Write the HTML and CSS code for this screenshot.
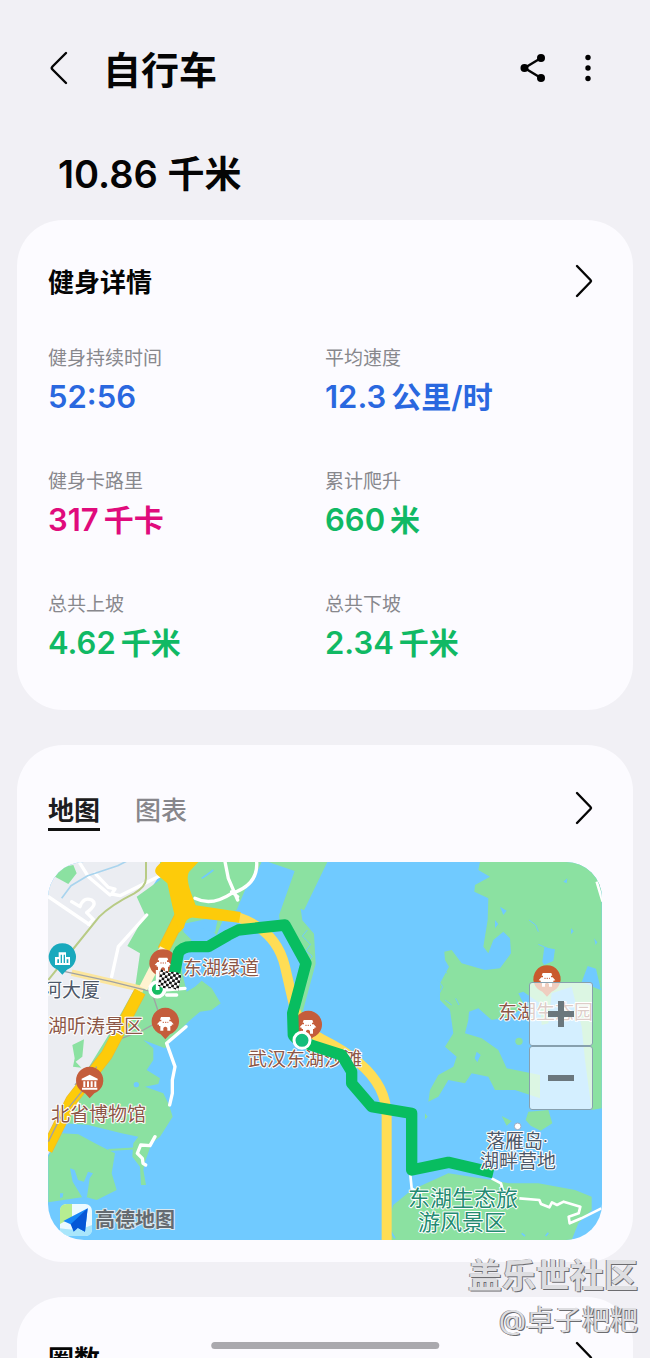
FILE: index.html
```html
<!DOCTYPE html>
<html lang="zh-CN">
<head>
<meta charset="utf-8">
<meta name="viewport" content="width=device-width, initial-scale=1">
<title>自行车</title>
<link rel="stylesheet" href="styles.css">
</head>
<body>
<div class="app">
  <header class="topbar">
    <button class="icon-btn" type="button" aria-label="返回">
      <svg width="20" height="34" viewBox="0 0 20 34"><path class="line" d="M18 2 4.500 15.500Q3 17 4.500 18.500L18 32"/></svg>
    </button>
    <h1 class="title">自行车</h1>
    <div class="actions">
      <button class="icon-btn" type="button" aria-label="分享">
        <svg width="26" height="30" viewBox="0 0 26 30"><path class="line" d="M21 5 4.500 15 21 25"/><circle cx="21" cy="5" r="4"/><circle cx="4.500" cy="15" r="4"/><circle cx="21" cy="25" r="4"/></svg>
      </button>
      <button class="icon-btn" type="button" aria-label="更多选项">
        <svg width="8" height="30" viewBox="0 0 8 30"><circle cx="4" cy="4.500" r="2.700"/><circle cx="4" cy="15" r="2.700"/><circle cx="4" cy="25.500" r="2.700"/></svg>
      </button>
    </div>
  </header>

  <p class="distance">10.86 <span class="distance-unit">千米</span></p>

  <main class="cards">
    <section class="card">
      <div class="card-head">
        <h2 class="card-title">健身详情</h2>
        <button class="icon-btn" type="button" aria-label="查看健身详情">
          <svg width="20" height="38" viewBox="0 0 20 38"><path class="line" d="m3 2 13.500 14q1 1 0 2L3 32"/></svg>
        </button>
      </div>
      <dl class="stats">
        <div><dt>健身持续时间</dt><dd class="blue">52:56</dd></div>
        <div><dt>平均速度</dt><dd class="blue">12.3<span class="unit">公里/时</span></dd></div>
        <div><dt>健身卡路里</dt><dd class="pink">317<span class="unit">千卡</span></dd></div>
        <div><dt>累计爬升</dt><dd class="green">660<span class="unit">米</span></dd></div>
        <div><dt>总共上坡</dt><dd class="green">4.62<span class="unit">千米</span></dd></div>
        <div><dt>总共下坡</dt><dd class="green">2.34<span class="unit">千米</span></dd></div>
      </dl>
    </section>

    <section class="card card-map">
      <div class="card-head">
        <div class="tabs" role="tablist">
          <button class="tab tab-active" type="button" role="tab" aria-selected="true">地图</button>
          <button class="tab" type="button" role="tab" aria-selected="false">图表</button>
        </div>
        <button class="icon-btn" type="button" aria-label="查看地图">
          <svg width="20" height="38" viewBox="0 0 20 38"><path class="line" d="m3 2 13.500 14q1 1 0 2L3 32"/></svg>
        </button>
      </div>
      <div class="map">
        <svg class="map-svg" viewBox="48 862 554 378" preserveAspectRatio="xMidYMid slice" role="img" aria-label="骑行路线地图">
          <defs>
            <g id="pagoda" fill="#fff">
              <path d="M-13-20h26l3 8h-4v5h5l8 9-6 1v4h-4v14H6v-8q-6-8-12 0v8h-9V7h-4V3l-6-1 8-9h5v-5h-4z"/>
              <path d="M-8-4H9" stroke="#c45d3b" stroke-width="3" stroke-dasharray="4 3"/>
            </g>
            <path id="pin" d="M0 50-14 35A41 41 0 1 1 14 35Z" transform="translate(0 -3)"/>
            <pattern id="checks" width="16" height="16" patternUnits="userSpaceOnUse"><path fill="#fff" d="M0 0h16v16H0z"/><path fill="#151515" d="M0 0h8v8H0zM8 8h8v8H8z"/></pattern>
          </defs>
          <g transform="translate(40 855) scale(.333333)">
            <!-- water and built-up area -->
            <path class="water" d="M0 0h1700v1170H0z"/>
            <path class="urban" d="M0 0h400L320 120l-10 270L190 620 24 900z"/>
            <!-- western shore -->
            <g transform="translate(15 15)">
              <path class="land" d="M345 5H650L625 60 600 90 575 150 540 165 515 225 480 195 430 195 415 215 440 240 405 265 412 340 425 395 450 380 470 362 500 385 527 430 500 450 465 455 430 485 390 525 360 565 295 540 325 565 325 600 305 630 345 655 340 672 300 680 355 700 372 735 383 770 345 830 320 850 300 905 295 930 303 975 288 975 285 920 262 890 265 850 280 830 230 820 130 795 60 790 10 900 60 740 120 640 200 510 270 385 285 280 247 258 300 165 275 110 345 60Z"/>
              <path class="land" d="M10 890 50 820 100 823 150 850 185 868 210 880 200 940 215 990 155 1020 120 1010 10 1027Z"/>
              <path class="water" d="m75 925 8 40 30 50 13-5 8-55 10-15-15-5-12 30-18-5-10-30zM45 1000h10l-2 12-8 2zM400 195l70-15 50-12-10 50-60-20-35 15z"/>
              <circle class="water" cx="274" cy="674" r="8"/>
              <path class="land-line" d="m190 870 90-5"/>
              <path class="land" d="m30 50 20-28 35-7 10 25-25 32zM82 555l35-17-5 52-20 15 17 18-25-3 5-25z"/>
              <path class="water-line" d="m470 55 15-10 20-15"/>
            </g>
            <!-- causeway -->
            <path class="land" d="M685 21H862l-70 145-10-5 5 35 35 40 5 90-35 130-20 70h-12l30-190-70-130-3-25 47-133z"/>
            <path class="water-line thin" d="m802 225-15 18 25 25-15 20 20 15-15 20"/>
            <!-- eastern shore -->
            <g transform="translate(1155 15)">
              <path class="land" d="M165 5 160 30 195 50 150 75 148 95 190 115 188 180 175 260 190 280 205 240 235 215 255 235 258 280 225 325 180 330 110 310 80 270 58 275 60 300 72 320 45 370 45 420 75 450 85 520 60 560 95 590 85 620 40 645 15 690 10 725 40 710 70 660 120 670 140 640 190 650 210 690 270 690 345 715 345 645 245 625 220 570 170 535 120 520 130 480 132 455 160 445 200 480 250 470 300 440 280 400 295 395 345 430 350 495 370 490 380 400 440 380 470 500 480 600 500 750 530 745V5Z"/>
              <path class="water" d="m358 262 32 6-5 35-28 12-5-10zM488 318l25 8 15 65-58-25zM225 140l20 12-10 13zM210 180l10 12-10 13zM438 205l8 9-8 9zM507 235l10 12-5 8zM415 65l12-10-2 15zM155 575l12 10-10 22-8-12z"/>
              <path class="water-line thin" d="m312 180 20 15 8 20m0 38 28 12M38 360l15 20-15 30m15-90 12 20m-5 80 20 15m-10 70 12 15m10-105 10 20"/>
              <circle class="land" cx="282" cy="544" r="11"/>
              <path class="land" d="m302 780 8-25 60-5 12 40-35 22-30-15zM230 768l30 15-15 14zM0 760l8 10-8 8z"/>
              <path class="land" d="M-130 1140-95 1035-40 990 70 940 200 960 250 970 340 970 450 990 500 1010 500 1050 460 1090 440 1140Z"/>
              <path class="water-line" d="m-115 1095 25 40M290 1120l10 8m70-10-8 10"/>
              <path class="road-thin" d="m200 955 28 15 5 20 20 15m30 10 60 5 5 12 25 10 8-15 15 8 20-10 50 15-5 20-30 10 3 20 35-15 60-30M515 65l18 60"/>
            </g>
            <path class="road-thin" d="m1110 950 5 50 15 10"/>
            <!-- minor roads -->
            <g transform="translate(15 15)">
              <path class="road" d="m105 10 25 40 65 55m-185 5 125 85M80 125l25 15q10-30 35-20 20 12-15 38l20 20-15 15M150 40l40 42 20 5-10 15 25 5 120-60M305 165l-85 95-20 90"/>
              <path class="road" d="m540 5 10 50 28 65M450 115q50 25 110-15Q640 75 635 5M578 110l-18-15"/>
              <path class="road" d="M365 405h30m-40-15 65-5M365 550l58-50m-58 50 25 70-8 40 0 40-8 35M90 715l20 40M330 830l-15 27-28-2-10 25 15 15 2 15 8 5"/>
              <path class="creek" d="m50 115 28-38 50-30 90-30 30-15"/>
              <path class="avenue" d="M303 5v50q0 25-35 45-70 35-105 70L82 270 10 360"/>
              <path d="m80 338 215 50" fill="none" stroke="#fce69d" stroke-width="19"/>
              <path class="hairline" d="m60 335 140 30 120 30 20 60 0 30-45 25-90 35-40 40-75 90"/>
            </g>
            <!-- motorways -->
            <path class="highway-edge" d="m435 155-65 130m-70 125-100 190-105 135-75 150"/>
            <path class="highway" d="m435 155-65 130m-70 125-100 190-105 135-75 150"/>
            <path d="m372 280-62 120" fill="none" stroke="#fff3d0" stroke-width="26"/>
            <path class="ring" d="M590 185q120 40 145 150l30 130 25 55 60 35q130 65 170 145 20 40 20 85v385l10 30"/>
            <path fill="#fdcb0a" d="M365 21h110l-28 30q-10 15 5 60l15 40 135 20-5 32-135-15q-25-3-30 30l-15 15-20-80-15-68-30-25q-18-15 13-39z"/>
            <path class="hairline" d="M170 635 125 710 60 790 25 860"/>
            <!-- place pins behind the route -->
            <use href="#pin" x="369" y="330" fill="#c45d3b"/><use href="#pagoda" x="369" y="328"/>
            <use href="#pin" x="805" y="515" fill="#c45d3b"/><use href="#pagoda" x="804" y="515"/>
          </g>
          <g class="label brown"><text x="248" y="1066">武汉东湖沙滩</text></g>
          <g transform="translate(40 855) scale(.333333)">
            <path class="route" d="m402 365 13-70q10-20 40-20t50 0l60-35 30-15 140-15 63 115-40 150 2 65q5 15 58 32l87 28 30 50v35l60 70 120 20v170l110-23 135 31"/>
            <circle cx="352" cy="403" r="22" fill="#14bd63" stroke="#fff" stroke-width="11"/>
            <path d="M353 345v60" stroke="#fff" stroke-width="11"/>
            <circle cx="786" cy="556" r="24" fill="#14bd7a" stroke="#fff" stroke-width="9"/>
            <path fill="url(#checks)" d="M0 0q18 8 33 3t31 3v50q-16-8-31-3T0 50z" transform="translate(362 342) rotate(10)"/>
            <use href="#pin" x="67" y="312" fill="#19a9bd"/>
            <path fill="#fff" d="M45 330v-24h11v-14h22v14h12v24zM52 313v11h5v-11zm10-14v25h4v-25zm9 0v25h4v-25zm9 14v11h5v-11z" fill-rule="evenodd"/>
            <use href="#pin" x="376" y="506" fill="#c45d3b"/><use href="#pagoda" x="376" y="506"/>
            <use href="#pin" x="149" y="683" fill="#c45d3b"/>
            <path fill="#fff" d="m149 659 24 12v5h-48v-5zM130 679h6v17h-6zm11 0h6v17h-6zm11 0h6v17h-6zm11 0h6v17h-6zm-37 19h46v6h-46z"/>
            <use href="#pin" x="1521" y="378" fill="#c95a2d"/><use href="#pagoda" x="1521" y="374"/>
            <circle cx="1433" cy="814" r="10" fill="#fff" stroke="#9eabc0" stroke-width="3"/>
            <!-- provider logo -->
            <rect x="60" y="1047" width="96" height="96" rx="20" fill="#ecfaff"/>
            <path fill="#b7ed91" d="M80 1047h16v40l-36 20v-40q0-20 20-20z"/>
            <path fill="#a9e6fb" d="M60 1120q50 10 96-10v13q0 20-20 20H80q-20 0-20-20z"/>
            <path fill="#1687f7" d="m143 1060-73 38 22 10 43 22z"/><path fill="#0557d6" d="m143 1060-51 48 9 22 13-11 21 11z"/>
          </g>
          <g class="label brown">
            <text x="183" y="975">东湖绿道</text>
            <text x="48" y="1033">湖听涛景区</text>
            <text x="51" y="1121">北省博物馆</text>
            <text x="498" y="1019">东湖生态园</text>
          </g>
          <g class="label slate">
            <text x="43" y="997">河大厦</text>
            <text x="486" y="1148">落雁岛<tspan class="dot">·</tspan></text>
            <text x="480" y="1168">湖畔营地</text>
          </g>
          <g class="label scenic">
            <text x="408" y="1206">东湖生态旅</text>
            <text x="418" y="1230">游风景区</text>
          </g>
          <text class="provider" x="95" y="1227">高德地图</text>
        </svg>
        <div class="zoom">
          <button class="zoom-btn" type="button" aria-label="放大"><svg width="28" height="28" viewBox="0 0 28 28"><path d="M14 1v26M1 14h26"/></svg></button>
          <button class="zoom-btn" type="button" aria-label="缩小"><svg width="28" height="28" viewBox="0 0 28 28"><path d="M1 14h26"/></svg></button>
        </div>
      </div>
    </section>

    <section class="card">
      <div class="card-head">
        <h2 class="card-title">圈数</h2>
        <button class="icon-btn" type="button" aria-label="查看圈数">
          <svg width="20" height="38" viewBox="0 0 20 38"><path class="line" d="m3 2 13.500 14q1 1 0 2L3 32"/></svg>
        </button>
      </div>
    </section>
  </main>

  <div class="watermark"><p class="community">盖乐世社区</p><p class="author">@卓子粑粑</p></div>
  <div class="home-bar"></div>
</div>
</body>
</html>
```

FILE: styles.css
```css
* { box-sizing: border-box; }
body, h1, h2, p, dl, dd { margin: 0; }

body {
  background: #f1f0f5;
  color: #050505;
  font-family: Inter, "Noto Sans CJK SC", sans-serif;
}

button {
  padding: 0;
  border: 0;
  background: none;
  color: inherit;
  font: inherit;
}

.app {
  position: relative;
  height: 100vh;
  overflow: hidden;
}

.icon-btn { display: flex; }

.line {
  fill: none;
  stroke: #050505;
  stroke-width: 2.4;
  stroke-linecap: round;
}

.topbar {
  display: flex;
  align-items: center;
  gap: 35px;
  padding: 40px 58px 0 48px;
  height: 96px;
}

.title {
  flex: 1;
  padding-top: 4px;
  font-size: 38px;
  line-height: 56px;
  font-weight: 600;
}

.actions {
  display: flex;
  gap: 38px;
}

.distance {
  padding: 50px 58px 17px;
  font-size: 38px;
  line-height: 56px;
  font-weight: 600;
}

.distance-unit { font-size: 37px; }

.cards {
  display: flex;
  flex-direction: column;
  gap: 35px;
  padding: 0 17px;
}

.card {
  padding: 43px 31px;
  border-radius: 46px;
  background: #fcfbff;
}

.card-map { padding-bottom: 22px; }

.card-head {
  display: flex;
  align-items: center;
  justify-content: space-between;
  padding-right: 8px;
}

.card-title {
  font-size: 26px;
  line-height: 40px;
  font-weight: 600;
}

.stats {
  display: grid;
  grid-template-columns: 1fr 1fr;
  row-gap: 47px;
  margin-top: 42px;
}

.stats dt {
  color: #88888d;
  font-size: 19px;
  line-height: 28px;
}

.stats dd {
  display: flex;
  align-items: center;
  gap: 5px;
  font-size: 31px;
  line-height: 48px;
  font-weight: 600;
}

.stats .unit { font-size: 30px; }

.blue { color: #2a68df; }
.pink { color: #e00b7c; }
.green { color: #10b964; }

.tabs {
  display: flex;
  gap: 35px;
}

.tab {
  padding-top: 6px;
  border-bottom: 3px solid transparent;
  color: #87868b;
  font-size: 26px;
  line-height: 34px;
  font-weight: 500;
}

.tab-active {
  border-color: #111;
  color: #1c1c20;
  font-weight: 600;
}

.map {
  position: relative;
  margin-top: 31px;
  border-radius: 36px;
  overflow: hidden;
}

.map-svg {
  display: block;
  width: 100%;
}

.water { fill: #70caff; }
.urban { fill: #ebedf2; }
.land { fill: #8be1a1; }

.land-line, .water-line, .road, .road-thin, .creek, .avenue, .hairline, .highway, .highway-edge, .ring, .route {
  fill: none;
  stroke-linejoin: round;
}

.land-line { stroke: #8be1a1; stroke-width: 6; }
.water-line { stroke: #70caff; stroke-width: 5; }
.thin { stroke-width: 3; }
.road { stroke: #fff; stroke-width: 10; stroke-linecap: round; }
.road-thin { stroke: #fff; stroke-width: 8; }
.creek { stroke: #a9d4ee; stroke-width: 5; }
.avenue { stroke: #b8cb85; stroke-width: 6; }
.hairline { stroke: #a0a2a4; stroke-width: 4; }
.highway { stroke: #fdcb0a; stroke-width: 33; }
.highway-edge { stroke: #e6ba38; stroke-width: 37; }
.ring { stroke: #ffdd55; stroke-width: 30; }
.route { stroke: #08bd60; stroke-width: 34; }

.label {
  font-family: "Noto Sans CJK SC", sans-serif;
  font-size: 19px;
  stroke: #fff;
  stroke-width: 2px;
  stroke-linejoin: round;
  paint-order: stroke;
}

.brown { fill: #8c5747; }
.slate { fill: #4d5868; }
.scenic { fill: #238a71; font-size: 22px; }
.dot { font-family: Roboto, sans-serif; }

.provider {
  fill: #646a70;
  stroke: #dce8ee;
  stroke-width: 2px;
  paint-order: stroke;
  font-family: "Noto Sans CJK SC", sans-serif;
  font-size: 20px;
  font-weight: 700;
}

.zoom {
  position: absolute;
  top: 120px;
  right: 9px;
  display: grid;
}

.zoom-btn {
  display: grid;
  place-items: center;
  width: 64px;
  height: 64px;
  border: 1px solid #87a0ae;
  border-radius: 3px;
  background: rgba(255, 255, 255, 0.7);
}

.zoom-btn path {
  fill: none;
  stroke: #6b777d;
  stroke-width: 6;
}

.watermark {
  position: absolute;
  right: 12px;
  bottom: 16px;
  color: #dedee1;
  text-align: right;
  text-shadow: 1px 1px 0 #6c6c6f, -1px 0 0 #8c8c8f;
}

.community {
  font-size: 34px;
  line-height: 44px;
  font-weight: 700;
}

.author {
  font-size: 28px;
  line-height: 44px;
}

.home-bar {
  position: absolute;
  bottom: 9px;
  left: 50%;
  width: 35%;
  height: 7px;
  border-radius: 4px;
  background: #aaa9ae;
  transform: translateX(-50%);
}
```
